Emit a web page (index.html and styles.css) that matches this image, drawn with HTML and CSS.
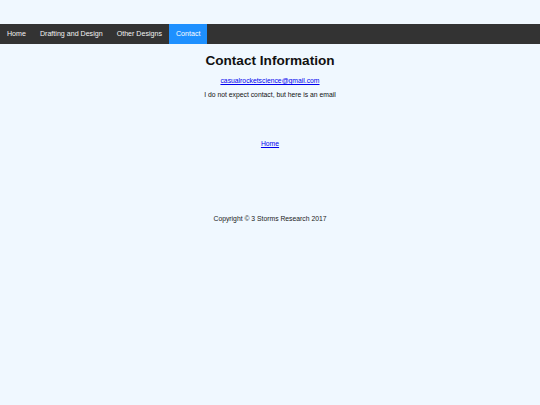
FILE: index.html
```html
<!DOCTYPE html>
<html>
<head>
<meta charset="utf-8">
<link rel="stylesheet" href="styles.css">
</head>
<body>
<nav class="topnav">
  <a href="#">Home</a>
  <a href="#">Drafting and Design</a>
  <a href="#">Other Designs</a>
  <a href="#" class="active">Contact</a>
</nav>
<main class="content">
  <h1 class="title">Contact Information</h1>
  <p class="email"><a href="#">casualrocketscience@gmail.com</a></p>
  <p class="note">I do not expect contact, but here is an email</p>
  <p class="home"><a href="#">Home</a></p>
  <p class="copy">Copyright © 3 Storms Research 2017</p>
</main>
</body>
</html>
```
FILE: styles.css
```css
html, body {
  margin: 0;
  padding: 0;
  background: #f0f8ff;
  font-family: "Liberation Sans", Arial, sans-serif;
}
.topnav {
  margin-top: 24px;
  height: 20px;
  background: #333333;
  display: flex;
}
.topnav a {
  color: #f2f2f2;
  text-decoration: none;
  font-size: 7.1px;
  line-height: 20px;
  padding: 0 7px;
}
.topnav a.active {
  background: #1e90ff;
  color: #ffffff;
}
.content {
  text-align: center;
  color: #111;
}
.title {
  font-size: 13.6px;
  line-height: 16px;
  margin: 9px 0 0;
}
.content p {
  font-size: 6.8px;
  line-height: 8px;
  margin: 0;
}
.content a { color: #0000ee; }
.email { margin-top: 8px !important; }
.note { margin-top: 6px !important; }
.home { margin-top: 41px !important; }
.copy { margin-top: 67px !important; color: #222; }
```
